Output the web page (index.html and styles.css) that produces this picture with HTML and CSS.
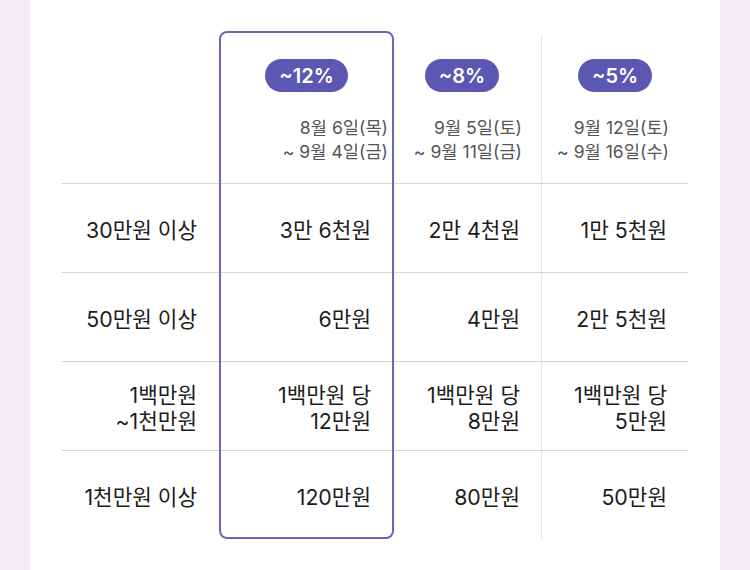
FILE: index.html
```html
<!DOCTYPE html>
<html lang="ko">
<head>
<meta charset="utf-8">
<link rel="stylesheet" href="styles.css">
</head>
<body>
<div class="card">
  <div class="table">
    <div class="highlight"></div>

    <div class="head c1"></div>
    <div class="head c2">
      <span class="badge">~12%</span>
      <div class="date">8월 6일(목)<br>~ 9월 4일(금)</div>
    </div>
    <div class="head c3">
      <span class="badge">~8%</span>
      <div class="date">9월 5일(토)<br>~ 9월 11일(금)</div>
    </div>
    <div class="head c4">
      <span class="badge">~5%</span>
      <div class="date">9월 12일(토)<br>~ 9월 16일(수)</div>
    </div>

    <div class="cell c1">30만원 이상</div>
    <div class="cell c2">3만 6천원</div>
    <div class="cell c3">2만 4천원</div>
    <div class="cell c4">1만 5천원</div>

    <div class="cell c1">50만원 이상</div>
    <div class="cell c2">6만원</div>
    <div class="cell c3">4만원</div>
    <div class="cell c4">2만 5천원</div>

    <div class="cell c1">1백만원<br>~1천만원</div>
    <div class="cell c2">1백만원 당<br>12만원</div>
    <div class="cell c3">1백만원 당<br>8만원</div>
    <div class="cell c4">1백만원 당<br>5만원</div>

    <div class="cell c1">1천만원 이상</div>
    <div class="cell c2">120만원</div>
    <div class="cell c3">80만원</div>
    <div class="cell c4">50만원</div>
  </div>
</div>
</body>
</html>
```

FILE: styles.css
```css
html, body {
  margin: 0;
  padding: 0;
  background: #f2ecf5;
}

body {
  font-family: Inter, "Noto Sans CJK KR", sans-serif;
  color: #1c1c1c;
}

.card {
  margin: 0 30px;
  height: 570px;
  background: #ffffff;
  padding: 35px 0 0 32px;
  box-sizing: border-box;
}

.table {
  position: relative;
  display: grid;
  grid-template-columns: 157px 175px 147px 147px;
  grid-template-rows: 148px repeat(4, 89px);
  width: 626px;
}

.highlight {
  position: absolute;
  left: 157px;
  top: -4px;
  width: 175px;
  height: 508px;
  box-sizing: border-box;
  border: 2px solid #6c66bb;
  border-radius: 8px;
  pointer-events: none;
}

.head {
  display: flex;
  flex-direction: column;
  align-items: center;
  padding-top: 24px;
  box-sizing: border-box;
}

.head.c4 {
  border-left: 1px solid #e4e4e8;
}

.badge {
  display: inline-flex;
  align-items: center;
  justify-content: center;
  height: 33px;
  padding: 0 14px;
  border-radius: 17px;
  background: #5c57b3;
  color: #ffffff;
  font-size: 20px;
  font-weight: 600;
  line-height: 1;
}

.head.c3 .badge {
  margin-right: 11px;
}

.date {
  align-self: stretch;
  margin-top: 24px;
  text-align: right;
  font-size: 17.6px;
  line-height: 24px;
  color: #555555;
}

.head.c2 .date { padding-right: 6px; }
.head.c3 .date { padding-right: 19px; }
.head.c4 .date { padding-right: 19px; }

.cell {
  display: flex;
  align-items: center;
  justify-content: flex-end;
  text-align: right;
  border-top: 1px solid #d4d4da;
  font-size: 21.3px;
  line-height: 26px;
  padding-top: 4px;
  box-sizing: border-box;
}

.cell.c1 { padding-right: 22px; }
.cell.c2 { padding-right: 23px; }
.cell.c3 { padding-right: 21px; }
.cell.c4 {
  padding-right: 21px;
  border-left: 1px solid #e4e4e8;
}
```
